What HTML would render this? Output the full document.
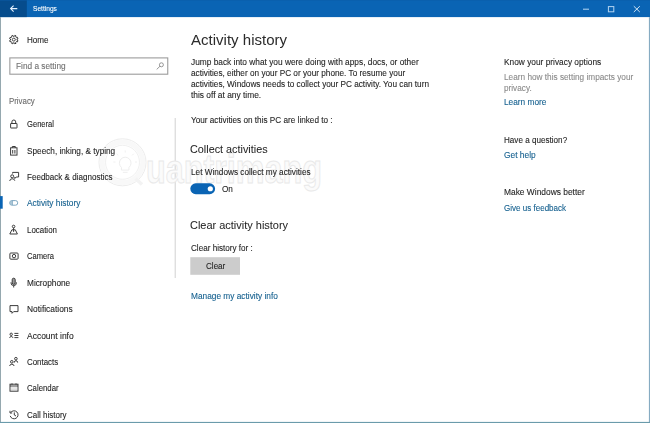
<!DOCTYPE html>
<html><head><meta charset="utf-8"><title>Settings</title>
<style>
html,body{margin:0;padding:0;}
body{width:650px;height:423px;overflow:hidden;background:#fff;position:relative;font-family:"Liberation Sans",sans-serif;}
.t{position:absolute;white-space:nowrap;line-height:1;transform-origin:0 0;display:block;-webkit-text-stroke:0.1px currentColor;}
.a{position:absolute;}
#h1{-webkit-text-stroke:0;}#h2,#h3{-webkit-text-stroke:0.04px currentColor;}
</style></head><body>
<!-- title bar + borders -->
<svg class="a" style="left:0;top:0" width="650" height="423" viewBox="0 0 650 423">
  <rect x="0" y="0" width="650" height="17.1" fill="#0a64b4"/>
  <rect x="0" y="0" width="26.8" height="17.1" fill="#064c8c"/>
  <rect x="0" y="0" width="650" height="0.8" fill="#0b5ea8" fill-opacity=".6"/>
  <g stroke="#fff" stroke-width="1" fill="none">
    <path d="M10.6 8.6 H17.3 M13.6 5.6 L10.6 8.6 L13.6 11.6" stroke-width="1.1" stroke="#e6f2ff"/>
    <path d="M583 9.2 H589" stroke="#b9d8f3"/>
    <rect x="608.4" y="6.6" width="5.4" height="5.2" stroke="#b4d4f1"/>
    <path d="M633.8 6.2 L639.8 12 M639.8 6.2 L633.8 12" stroke="#e4f0fa" stroke-width="0.9"/>
  </g>
  <!-- window border -->
  <rect x="0" y="17.1" width="0.9" height="406" fill="#8a9fa6"/>
  <rect x="648.9" y="17.1" width="1.1" height="406" fill="#86abc2"/>
  <rect x="0" y="421.9" width="650" height="1.1" fill="#6a9bab"/>
  <!-- search box -->
  <rect x="9.85" y="57.9" width="157.9" height="16.3" fill="#fff" stroke="#9c9c9c" stroke-width="1.1"/>
  <g stroke="#7d7d7d" stroke-width="0.8" fill="none"><circle cx="161.4" cy="64.8" r="2"/><path d="M160 66.2 L156.7 69.4"/></g>
  <!-- selection indicator -->
  <rect x="0" y="196.1" width="2.7" height="12.6" fill="#0a64b4"/>
  <!-- divider -->
  <rect x="174.7" y="118" width="1" height="160" fill="#d2d2d2"/>
  <!-- watermark -->
  <g fill="none" stroke="#ececec" stroke-width="1">
    <circle cx="122.500" cy="162.300" r="23.500"/>
    <circle cx="122.500" cy="162.300" r="17" stroke="#f0f0f0"/>
    <circle cx="122.500" cy="162.300" r="20.300" stroke-width="5" stroke="#f8f8f8"/>
    <path d="M121.500 167.500 a5.800 5.800 0 1 1 7.400 0 v2.600 h-7.400 z M122.800 172.300 h4.800" stroke="#eeeeee"/>
    <path d="M125.200 152.600 v-2.200 M118.300 155.400 l-1.600 -1.600 M132.100 155.400 l1.600 -1.600 M115.500 162 h-2.200 M134.900 162 h2.200" stroke="#f0f0f0"/>
    <path d="M135.500 178.500 l6.500 6" stroke-width="3.500" stroke="#f3f3f3"/>
    <text x="146" y="183" font-family="Liberation Sans, sans-serif" font-size="41" font-weight="bold" textLength="176" lengthAdjust="spacingAndGlyphs" stroke="#e9e9e9" stroke-width="1" fill="#fbfbfb">uantrimang</text>
  </g>
  <!-- toggle -->
  <rect x="190.300" y="183.300" width="24.800" height="10.900" rx="5.450" fill="#0a64b4"/>
  <circle cx="210.300" cy="188.750" r="2.600" fill="#fff"/>
  <!-- clear button -->
  <rect x="190.300" y="257.200" width="49.700" height="17.600" fill="#cccccc"/>
  <!-- icons -->
  <g fill="none" stroke="#333" stroke-width="0.95">
    <!-- home gear -->
    <path d="M17.06 40.12 L17.98 40.60 L17.47 41.85 L16.47 41.54 L15.74 42.27 L16.05 43.27 L14.80 43.78 L14.32 42.86 L13.28 42.86 L12.80 43.78 L11.55 43.27 L11.86 42.27 L11.13 41.54 L10.13 41.85 L9.62 40.60 L10.54 40.12 L10.54 39.08 L9.62 38.60 L10.13 37.35 L11.13 37.66 L11.86 36.93 L11.55 35.93 L12.80 35.42 L13.28 36.34 L14.32 36.34 L14.80 35.42 L16.05 35.93 L15.74 36.93 L16.47 37.66 L17.47 37.35 L17.98 38.60 L17.06 39.08 Z" stroke-linejoin="round" stroke-width="1"/><circle cx="13.8" cy="39.6" r="1.5" stroke-width="0.9"/>
    <!-- lock -->
    <rect x="10.600" y="123.500" width="6.400" height="4.500" rx="0.300"/><path d="M11.900 123.500 V121.900 a1.900 1.900 0 0 1 3.800 0 V123.500"/>
    <!-- clipboard (speech) -->
    <rect x="10.600" y="147.800" width="6.400" height="7.300"/><path d="M12.300 147.800 v-1.300 h3 v1.300 M12.700 150 v3.600 M14.900 150 v3.600"/>
    <!-- feedback -->
    <circle cx="12.200" cy="176.300" r="1.500"/><path d="M9.700 181 a2.600 2.600 0 0 1 5.100 -0.300"/><path d="M12.600 173.600 v-1.200 h6 v4.600 h-2.400 l-1.400 1.500 v-1.500"/>
    <!-- activity history -->
    <g stroke="#6f9dba" stroke-width="0.9"><rect x="9.700" y="200.600" width="8" height="4.600" rx="2.200"/><path d="M12.300 200.800 v4.200" /><path d="M10.600 201.300 v3.200 M11.400 200.900 v4" stroke="#9bbccf"/></g>
    <!-- location -->
    <circle cx="13.600" cy="226.500" r="1.300"/><path d="M13.600 227.900 v4 M11.900 229.800 L9.800 234 h7.600 L15.300 229.800 z"/>
    <!-- camera -->
    <rect x="9.900" y="253" width="8.200" height="6.200" rx="0.900"/><circle cx="14" cy="256.100" r="1.700"/>
    <!-- mic -->
    <rect x="12.200" y="278.200" width="3" height="6.200" rx="1.500" fill="#9a9a9a"/><path d="M11 282.300 v0.600 a2.700 2.700 0 0 0 5.400 0 v-0.600 M13.700 285.700 v1.800"/>
    <!-- notifications -->
    <path d="M10 305.600 h8 v6 h-4.300 l-1.700 1.700 v-1.700 h-2 z"/>
    <!-- account info -->
    <circle cx="11.200" cy="334.300" r="1.200"/><path d="M9.600 337.800 a1.700 1.700 0 0 1 3.300 0 M14.400 333.400 h4 M14.400 335.500 h4 M14.400 337.600 h4"/>
    <!-- contacts -->
    <circle cx="11.800" cy="361.800" r="1.300"/><path d="M9.600 366 a2.300 2.300 0 0 1 4.500 0"/><circle cx="15.900" cy="358.700" r="1.300"/><path d="M14.300 362.600 v-0.600 a1.700 1.700 0 0 1 3.300 0 v0.600"/>
    <!-- calendar -->
    <rect x="10" y="384.200" width="8" height="7"/><path d="M10 386 h8 M12 383.400 v1.300 M16 383.400 v1.300"/><path d="M11.500 388 h1 M13.500 388 h1 M15.500 388 h1 M11.500 389.800 h1 M13.500 389.800 h1 M15.500 389.800 h1" stroke-width="0.700" stroke="#777"/>
    <!-- call history -->
    <path d="M10.700 412.600 a4 4 0 1 1 -0.500 3.300"/><path d="M14.300 412.400 v2.600 l1.700 1 M10 410.800 v2.200 h2.200"/>
  </g>
</svg>

<div id="txt" style="position:absolute;left:0;top:0;width:650px;height:423px;will-change:transform">
<span id="tSettings" class="t" style="left:33.4px;top:11.30px;font-size:7.3px;color:#ffffff;transform:translateY(-0.8465em) scaleX(0.9077)">Settings</span>
<span id="tHome" class="t" style="left:27.0px;top:43.00px;font-size:8.7px;color:#1f1f1f;transform:translateY(-0.8465em) scaleX(0.9304)">Home</span>
<span id="tFind" class="t" style="left:15.6px;top:69.20px;font-size:8.5px;color:#707070;transform:translateY(-0.8465em) scaleX(0.9725)">Find a setting</span>
<span id="tPrivacy" class="t" style="left:8.5px;top:104.00px;font-size:8.6px;color:#6a6a6a;transform:translateY(-0.8465em) scaleX(0.9143)">Privacy</span>
<span id="n1" class="t" style="left:26.7px;top:127.00px;font-size:8.6px;color:#1f1f1f;transform:translateY(-0.8465em) scaleX(0.8839)">General</span>
<span id="n2" class="t" style="left:26.6px;top:153.50px;font-size:8.6px;color:#1f1f1f;transform:translateY(-0.8465em) scaleX(0.9565)">Speech, inking, &amp; typing</span>
<span id="n3" class="t" style="left:26.6px;top:180.00px;font-size:8.6px;color:#1f1f1f;transform:translateY(-0.8465em) scaleX(0.9374)">Feedback &amp; diagnostics</span>
<span id="n4" class="t" style="left:26.7px;top:206.20px;font-size:8.6px;color:#15608f;transform:translateY(-0.8465em) scaleX(0.9727)">Activity history</span>
<span id="n5" class="t" style="left:26.6px;top:233.00px;font-size:8.6px;color:#1f1f1f;transform:translateY(-0.8465em) scaleX(0.9212)">Location</span>
<span id="n6" class="t" style="left:26.7px;top:259.20px;font-size:8.6px;color:#1f1f1f;transform:translateY(-0.8465em) scaleX(0.8839)">Camera</span>
<span id="n7" class="t" style="left:26.6px;top:286.00px;font-size:8.6px;color:#1f1f1f;transform:translateY(-0.8465em) scaleX(0.9622)">Microphone</span>
<span id="n8" class="t" style="left:26.6px;top:312.20px;font-size:8.6px;color:#1f1f1f;transform:translateY(-0.8465em) scaleX(0.9766)">Notifications</span>
<span id="n9" class="t" style="left:26.7px;top:339.00px;font-size:8.6px;color:#1f1f1f;transform:translateY(-0.8465em) scaleX(0.9872)">Account info</span>
<span id="n10" class="t" style="left:26.7px;top:365.20px;font-size:8.6px;color:#1f1f1f;transform:translateY(-0.8465em) scaleX(0.9206)">Contacts</span>
<span id="n11" class="t" style="left:26.7px;top:391.30px;font-size:8.6px;color:#1f1f1f;transform:translateY(-0.8465em) scaleX(0.9057)">Calendar</span>
<span id="n12" class="t" style="left:26.7px;top:417.50px;font-size:8.6px;color:#1f1f1f;transform:translateY(-0.8465em) scaleX(0.9302)">Call history</span>
<span id="h1" class="t" style="left:190.7px;top:45.30px;font-size:15.2px;color:#2b2b2b;transform:translateY(-0.8465em) scaleX(0.9897)">Activity history</span>
<span id="p1" class="t" style="left:190.7px;top:65.30px;font-size:8.5px;color:#1f1f1f;transform:translateY(-0.8465em) scaleX(0.9793)">Jump back into what you were doing with apps, docs, or other</span>
<span id="p2" class="t" style="left:190.6px;top:76.30px;font-size:8.5px;color:#1f1f1f;transform:translateY(-0.8465em) scaleX(0.9674)">activities, either on your PC or your phone. To resume your</span>
<span id="p3" class="t" style="left:190.6px;top:87.30px;font-size:8.5px;color:#1f1f1f;transform:translateY(-0.8465em) scaleX(0.9675)">activities, Windows needs to collect your PC activity. You can turn</span>
<span id="p4" class="t" style="left:190.6px;top:98.20px;font-size:8.5px;color:#1f1f1f;transform:translateY(-0.8465em) scaleX(0.9859)">this off at any time.</span>
<span id="p5" class="t" style="left:190.6px;top:122.50px;font-size:8.5px;color:#1f1f1f;transform:translateY(-0.8465em) scaleX(0.9626)">Your activities on this PC are linked to :</span>
<span id="h2" class="t" style="left:190.4px;top:152.80px;font-size:11.2px;color:#1f1f1f;transform:translateY(-0.8465em) scaleX(0.9675)">Collect activities</span>
<span id="p6" class="t" style="left:190.6px;top:175.40px;font-size:8.5px;color:#1f1f1f;transform:translateY(-0.8465em) scaleX(0.9661)">Let Windows collect my activities</span>
<span id="tOn" class="t" style="left:221.7px;top:191.50px;font-size:8.5px;color:#1f1f1f;transform:translateY(-0.8465em) scaleX(0.9636)">On</span>
<span id="h3" class="t" style="left:190.4px;top:228.50px;font-size:11.2px;color:#1f1f1f;transform:translateY(-0.8465em) scaleX(0.9800)">Clear activity history</span>
<span id="p7" class="t" style="left:190.6px;top:250.50px;font-size:8.5px;color:#1f1f1f;transform:translateY(-0.8465em) scaleX(0.9538)">Clear history for :</span>
<span id="tClear" class="t" style="left:206.0px;top:269.00px;font-size:8.5px;color:#1f1f1f;transform:translateY(-0.8465em) scaleX(0.9500)">Clear</span>
<span id="l1" class="t" style="left:190.6px;top:298.70px;font-size:8.5px;color:#15608f;transform:translateY(-0.8465em) scaleX(0.9775)">Manage my activity info</span>
<span id="r1" class="t" style="left:503.8px;top:64.60px;font-size:8.5px;color:#1f1f1f;transform:translateY(-0.8465em) scaleX(0.9798)">Know your privacy options</span>
<span id="r2" class="t" style="left:503.8px;top:80.00px;font-size:8.5px;color:#8a8a8a;transform:translateY(-0.8465em) scaleX(0.9699)">Learn how this setting impacts your</span>
<span id="r3" class="t" style="left:503.8px;top:90.60px;font-size:8.5px;color:#8a8a8a;transform:translateY(-0.8465em) scaleX(0.9655)">privacy.</span>
<span id="r4" class="t" style="left:503.8px;top:105.40px;font-size:8.5px;color:#15608f;transform:translateY(-0.8465em) scaleX(0.9767)">Learn more</span>
<span id="r5" class="t" style="left:503.8px;top:142.80px;font-size:8.5px;color:#1f1f1f;transform:translateY(-0.8465em) scaleX(0.9545)">Have a question?</span>
<span id="r6" class="t" style="left:503.8px;top:158.00px;font-size:8.5px;color:#15608f;transform:translateY(-0.8465em) scaleX(0.9875)">Get help</span>
<span id="r7" class="t" style="left:503.8px;top:195.40px;font-size:8.5px;color:#1f1f1f;transform:translateY(-0.8465em) scaleX(0.9878)">Make Windows better</span>
<span id="r8" class="t" style="left:503.8px;top:211.20px;font-size:8.5px;color:#15608f;transform:translateY(-0.8465em) scaleX(0.9455)">Give us feedback</span>
</div>
</body></html>
